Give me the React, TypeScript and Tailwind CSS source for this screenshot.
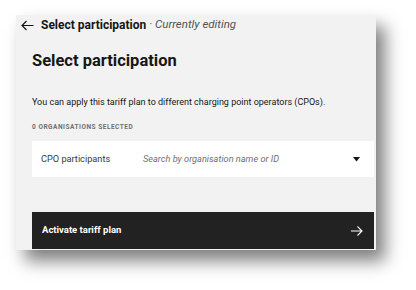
import React from 'react';

const App: React.FC = () => {
  return (
    <div className="w-[416px] h-[290px] bg-white overflow-hidden pt-[15px] pl-[16px]" style={{ fontFamily: 'Roboto, "Liberation Sans", Arial, sans-serif' }}>
      {/* Panel */}
      <div className="w-[360px] h-[235px] bg-[#f2f2f2] shadow-[9px_11px_16px_rgba(0,0,0,0.5)] flex flex-col">
        {/* Header */}
        <div className="h-[20px] flex items-center pl-[5px] text-[12px] text-[#161616]">
          <svg width="13" height="11" viewBox="0 0 13 11" fill="none" stroke="#161616" strokeWidth="1.2" className="mr-[7px]">
            <path d="M12.5 5.5H1M5.5 1L1 5.5L5.5 10" />
          </svg>
          <span className="font-bold">Select participation</span>
          <span className="text-[#525252] text-[11.5px] italic ml-[3px]">· Currently editing</span>
        </div>

        <div className="pl-[16px] pr-[2px] flex flex-col flex-1">
          <h1 className="mt-[15px] text-[16.5px] leading-[22px] font-bold text-[#161616]">Select participation</h1>

          <p className="mt-[23px] text-[9px] leading-[14px] text-[#161616]">
            You can apply this tariff plan to different charging point operators (CPOs).
          </p>

          <div className="mt-[13px] text-[6.5px] leading-[10px] font-bold tracking-[0.08em] text-[#6f6f6f]">
            0 ORGANISATIONS SELECTED
          </div>

          {/* Select field */}
          <div className="mt-[9px] h-[36px] bg-white flex items-center pl-[9px] pr-[14px]">
            <span className="w-[102px] text-[9.2px] text-[#393939]">CPO participants</span>
            <span className="flex-1 text-[9.2px] italic text-[#6f6f6f]">Search by organisation name or ID</span>
            <svg width="7" height="5" viewBox="0 0 7 5">
              <path d="M0 0H7L3.5 4.5Z" fill="#161616" />
            </svg>
          </div>

          <div className="flex-1" />

          {/* Button */}
          <button className="mb-[1px] h-[37px] bg-[#222222] flex items-center justify-between pl-[10px] pr-[11px] text-white">
            <span className="text-[9.5px] font-bold">Activate tariff plan</span>
            <svg width="12" height="10" viewBox="0 0 12 10" fill="none" stroke="white" strokeWidth="1.1">
              <path d="M0 5H11M6.5 0.5L11 5L6.5 9.5" />
            </svg>
          </button>
        </div>
      </div>
    </div>
  );
};

export default App;
